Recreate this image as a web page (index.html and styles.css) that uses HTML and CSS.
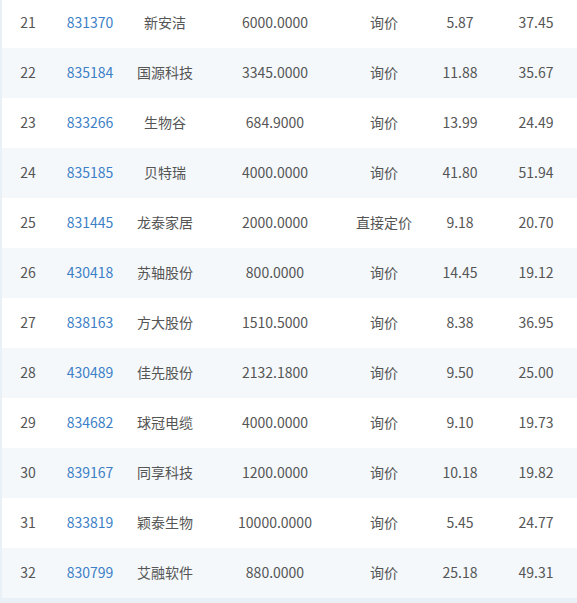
FILE: index.html
```html
<!DOCTYPE html>
<html lang="zh">
<head>
<meta charset="utf-8">
<link rel="stylesheet" href="styles.css">
</head>
<body>
<div class="wrap">
  <div class="table">
    <div class="row"><span>21</span><span class="code">831370</span><span>新安洁</span><span>6000.0000</span><span>询价</span><span>5.87</span><span>37.45</span></div>
    <div class="row alt"><span>22</span><span class="code">835184</span><span>国源科技</span><span>3345.0000</span><span>询价</span><span>11.88</span><span>35.67</span></div>
    <div class="row"><span>23</span><span class="code">833266</span><span>生物谷</span><span>684.9000</span><span>询价</span><span>13.99</span><span>24.49</span></div>
    <div class="row alt"><span>24</span><span class="code">835185</span><span>贝特瑞</span><span>4000.0000</span><span>询价</span><span>41.80</span><span>51.94</span></div>
    <div class="row"><span>25</span><span class="code">831445</span><span>龙泰家居</span><span>2000.0000</span><span>直接定价</span><span>9.18</span><span>20.70</span></div>
    <div class="row alt"><span>26</span><span class="code">430418</span><span>苏轴股份</span><span>800.0000</span><span>询价</span><span>14.45</span><span>19.12</span></div>
    <div class="row"><span>27</span><span class="code">838163</span><span>方大股份</span><span>1510.5000</span><span>询价</span><span>8.38</span><span>36.95</span></div>
    <div class="row alt"><span>28</span><span class="code">430489</span><span>佳先股份</span><span>2132.1800</span><span>询价</span><span>9.50</span><span>25.00</span></div>
    <div class="row"><span>29</span><span class="code">834682</span><span>球冠电缆</span><span>4000.0000</span><span>询价</span><span>9.10</span><span>19.73</span></div>
    <div class="row alt"><span>30</span><span class="code">839167</span><span>同享科技</span><span>1200.0000</span><span>询价</span><span>10.18</span><span>19.82</span></div>
    <div class="row"><span>31</span><span class="code">833819</span><span>颖泰生物</span><span>10000.0000</span><span>询价</span><span>5.45</span><span>24.77</span></div>
    <div class="row alt"><span>32</span><span class="code">830799</span><span>艾融软件</span><span>880.0000</span><span>询价</span><span>25.18</span><span>49.31</span></div>
  </div>
</div>
</body>
</html>
```
FILE: styles.css
```css
html, body {
  margin: 0;
  padding: 0;
  background: #eaf1f6;
}
.wrap {
  padding-left: 2px;
  margin-top: -2px;
}
.table {
  font-family: "Noto Sans CJK SC", "Noto Sans", sans-serif;
  font-size: 14px;
  color: #555;
}
.row {
  box-sizing: border-box;
  display: grid;
  grid-template-columns: 52px 72px 78px 142px 76px 76px 76px 10px;
  height: 50px;
  padding-bottom: 2px;
  align-items: center;
  background: #fff;
}
.row.alt {
  background: #f4f8fb;
}
.row span {
  text-align: center;
  white-space: nowrap;
}
.code {
  color: #3d7fc6;
}
```
